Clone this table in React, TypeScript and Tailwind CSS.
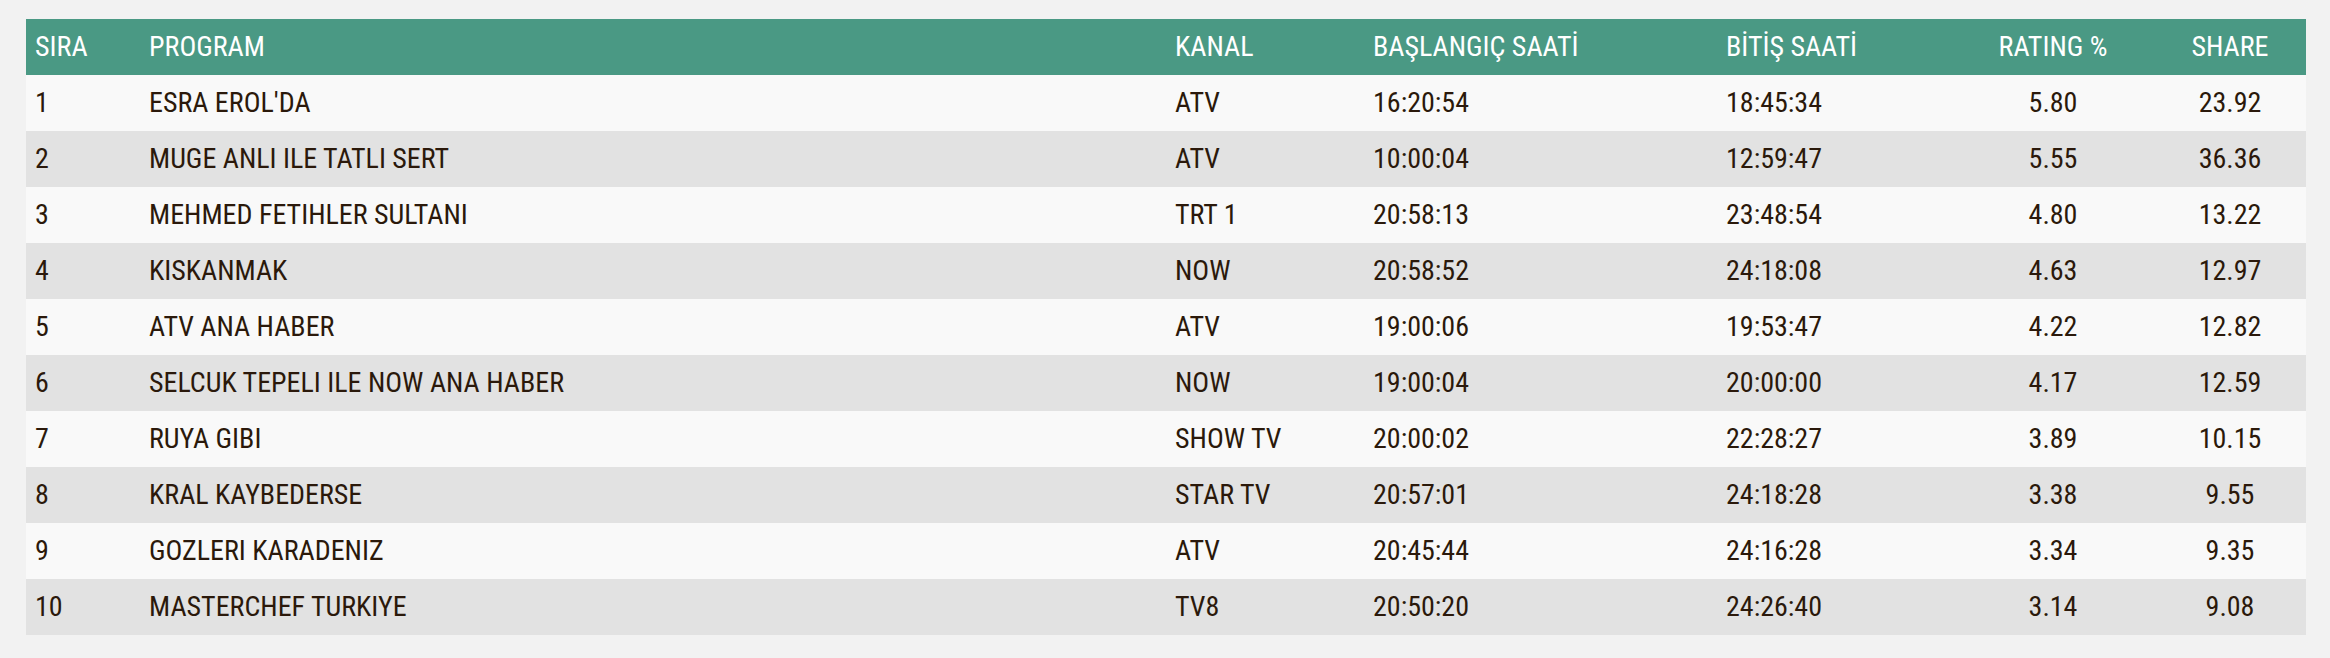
import React from "react";

const rows = [
  ["1", "ESRA EROL'DA", "ATV", "16:20:54", "18:45:34", "5.80", "23.92"],
  ["2", "MUGE ANLI ILE TATLI SERT", "ATV", "10:00:04", "12:59:47", "5.55", "36.36"],
  ["3", "MEHMED FETIHLER SULTANI", "TRT 1", "20:58:13", "23:48:54", "4.80", "13.22"],
  ["4", "KISKANMAK", "NOW", "20:58:52", "24:18:08", "4.63", "12.97"],
  ["5", "ATV ANA HABER", "ATV", "19:00:06", "19:53:47", "4.22", "12.82"],
  ["6", "SELCUK TEPELI ILE NOW ANA HABER", "NOW", "19:00:04", "20:00:00", "4.17", "12.59"],
  ["7", "RUYA GIBI", "SHOW TV", "20:00:02", "22:28:27", "3.89", "10.15"],
  ["8", "KRAL KAYBEDERSE", "STAR TV", "20:57:01", "24:18:28", "3.38", "9.55"],
  ["9", "GOZLERI KARADENIZ", "ATV", "20:45:44", "24:16:28", "3.34", "9.35"],
  ["10", "MASTERCHEF TURKIYE", "TV8", "20:50:20", "24:26:40", "3.14", "9.08"],
];

const headers = ["SIRA", "PROGRAM", "KANAL", "BAŞLANGIÇ SAATİ", "BİTİŞ SAATİ", "RATING %", "SHARE"];

const grid = "grid grid-cols-[114px_1026px_198px_353px_235px_202px_152px]";

export default function App() {
  return (
    <div
      className="w-[2330px] h-[658px] bg-[#f2f2f2] pt-[19px] pl-[26px]"
      style={{ fontFamily: "'Roboto Condensed', Roboto, 'Liberation Sans', sans-serif", fontStretch: "condensed" }}
    >
      <div className="w-[2280px]">
        <div className={`${grid} h-[56px] bg-[#4a9984] text-white text-[28px] items-center`}>
          {headers.map((h, i) => (
            <div key={i} className={`px-[9px] ${i >= 5 ? "text-center" : ""}`}>
              {h}
            </div>
          ))}
        </div>
        {rows.map((r, ri) => (
          <div
            key={ri}
            className={`${grid} h-[56px] items-center text-[28px] text-[#2b190b] ${ri % 2 === 0 ? "bg-[#f9f9f9]" : "bg-[#e2e2e2]"}`}
          >
            {r.map((c, ci) => (
              <div key={ci} className={`px-[9px] ${ci >= 5 ? "text-center" : ""}`}>
                {c}
              </div>
            ))}
          </div>
        ))}
      </div>
    </div>
  );
}
